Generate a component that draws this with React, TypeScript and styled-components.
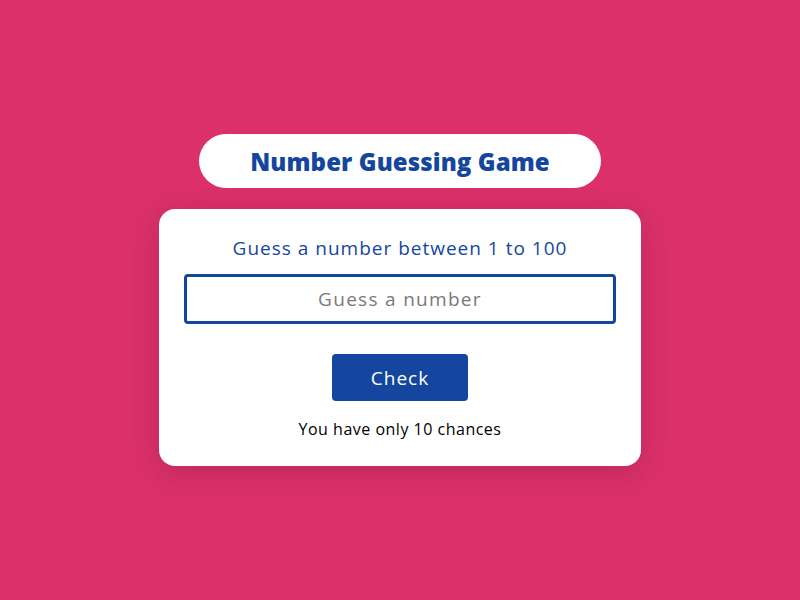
import React from 'react';
import styled, { createGlobalStyle } from 'styled-components';

const GlobalStyle = createGlobalStyle`
  * {
    box-sizing: border-box;
  }
  body {
    margin: 0;
    font-family: 'Open Sans', 'Liberation Sans', sans-serif;
    background: #db3069;
  }
`;

const Page = styled.main`
  width: 100%;
  height: 100vh;
  display: flex;
  flex-direction: column;
  align-items: center;
  justify-content: center;
  gap: 21px;
`;

const TitlePill = styled.header`
  width: 402px;
  height: 54px;
  border-radius: 27px;
  background: #ffffff;
  display: flex;
  justify-content: center;
  align-items: center;
  color: #1446a0;
  font-size: 24px;
  font-weight: 800;
  letter-spacing: 0.1px;
`;

const Card = styled.section`
  width: 482px;
  height: 257px;
  background: #ffffff;
  border-radius: 16px;
  box-shadow: 0 6px 30px rgba(0, 0, 0, 0.15);
  padding: 26px 25px 0;
  display: flex;
  flex-direction: column;
  align-items: center;
`;

const Prompt = styled.p`
  margin: 0;
  height: 27px;
  line-height: 27px;
  font-size: 19px;
  font-weight: 500;
  letter-spacing: 1px;
  color: #1446a0;
`;

const GuessInput = styled.input`
  margin-top: 12px;
  width: 100%;
  height: 50px;
  border: 3px solid #1446a0;
  border-radius: 4px;
  outline: none;
  text-align: center;
  font-family: inherit;
  font-size: 19px;
  letter-spacing: 1.3px;
  color: #333;
  -moz-appearance: textfield;
  &::-webkit-inner-spin-button,
  &::-webkit-outer-spin-button {
    -webkit-appearance: none;
    margin: 0;
  }
  &::placeholder {
    color: #7a7a7a;
  }
`;

const CheckButton = styled.button`
  margin-top: 30px;
  width: 136px;
  height: 47px;
  border: none;
  border-radius: 4px;
  background: #1446a0;
  color: #ffffff;
  font-family: inherit;
  font-size: 19px;
  letter-spacing: 1px;
  cursor: pointer;
`;

const Chances = styled.p`
  margin: 16px 0 0;
  font-size: 16px;
  line-height: 24px;
  letter-spacing: 0.5px;
  color: #000000;
`;

export default function App() {
  return (
    <>
      <GlobalStyle />
      <Page>
        <TitlePill>Number Guessing Game</TitlePill>
        <Card>
          <Prompt>Guess a number between 1 to 100</Prompt>
          <GuessInput type="number" placeholder="Guess a number" />
          <CheckButton>Check</CheckButton>
          <Chances>You have only 10 chances</Chances>
        </Card>
      </Page>
    </>
  );
}
